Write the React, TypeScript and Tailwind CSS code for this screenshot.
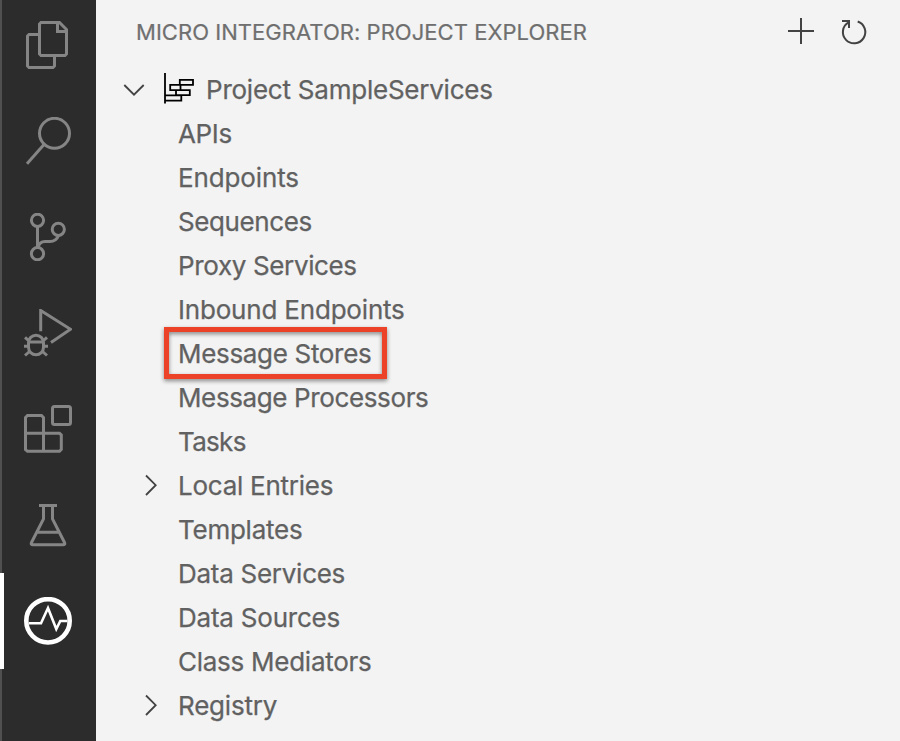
import React from "react";

const icons = [
  <g key="files"><path d="M17 1.5H35.5L42.5 8.5V33L41 34.5H17L15.5 33V3Z" /><path d="M33.5 2V10.5H42" /><path d="M15 13.5H5L3.5 15V45L5 46.5H29L30.5 45V35" /></g>,
  <g key="search"><circle cx="30.5" cy="16.3" r="15" /><path d="M20 27.5L3 46.7" /></g>,
  <g key="branch"><circle cx="13.5" cy="7.3" r="6.1" /><circle cx="34.3" cy="16.3" r="6.1" /><circle cx="13.5" cy="40.7" r="6.1" /><path d="M13.5 13.4V34.6M34.6 22.5C33 26.5 30 28.6 26 28.6H21C17.5 28.6 15 30.5 14 34.5" /></g>,
  <g key="debug"><path d="M16.7 22.3V1.5L46.5 20.3L27 33.5" /><rect x="4.5" y="26.2" width="15" height="19.6" rx="7.5" /><path d="M4.5 33H19.5M0 37.3H4.5M19.5 37.3H24M1 28.3L5 32M23 28.3L19 32M1 46.5L5.5 42.5M23 46.5L18.5 42.5" /></g>,
  <g key="extensions"><rect x="28.5" y="1.5" width="18" height="18" rx="2" /><path d="M3.5 10.5H17.5L19.5 12.5V28.3H35.5L37.3 30V44.5L35.5 46.3H3.5L1.5 44.5V12.5ZM1.5 28.3H19.5V46.3" /></g>,
  <g key="test"><path d="M15 4.5H33M19.5 4.5V18L7.5 41.5Q6.5 43.8 9 43.8H39Q41.5 43.8 40.5 41.5L28.5 18V4.5M12.5 31.3H35.5" /></g>,
  <g key="integrator"><circle cx="24" cy="23.8" r="21.7" strokeWidth="4.6" /><path d="M5 26.3H17L24 11L32.3 32L36.3 24H43.5" strokeWidth="2.6" /></g>,
];

const rows = [
  { label: "APIs", tracking: "tracking-[-0.35px]" },
  { label: "Endpoints", tracking: "tracking-[-0.12px]" },
  { label: "Sequences", tracking: "tracking-[-0.39px]" },
  { label: "Proxy Services", tracking: "tracking-[-0.36px]" },
  { label: "Inbound Endpoints", tracking: "tracking-[-0.19px]" },
  { label: "Message Stores", tracking: "tracking-[-0.32px]", marked: true },
  { label: "Message Processors", tracking: "tracking-[-0.38px]" },
  { label: "Tasks", tracking: "tracking-[-0.7px]" },
  { label: "Local Entries", tracking: "tracking-[-0.25px]", nested: true },
  { label: "Templates", tracking: "tracking-[-0.25px]" },
  { label: "Data Services", tracking: "tracking-[-0.27px]" },
  { label: "Data Sources", tracking: "tracking-[-0.22px]" },
  { label: "Class Mediators", tracking: "tracking-[-0.26px]" },
  { label: "Registry", tracking: "tracking-[-0.2px]", nested: true },
];

export default function App() {
  return (
    <div className="flex h-[741px] w-[900px] overflow-hidden bg-[#f3f3f3] font-['Inter',sans-serif]">
      <nav className="relative flex w-24 shrink-0 flex-col items-center gap-12 border-l-2 border-[#505050] bg-[#2c2c2c] pt-[21px] pr-0.5">
        <div className="absolute top-[573px] -left-0.5 h-24 w-1 bg-white" />
        {icons.map((icon, i) => (
          <svg key={i} viewBox="0 0 48 48" fill="none" strokeWidth="3" className={i === 6 ? "size-12 shrink-0 stroke-white" : "size-12 shrink-0 stroke-[#858585]"}>
            {icon}
          </svg>
        ))}
      </nav>
      <main className="min-w-0 flex-1">
        <header className="flex h-[68px] items-start pl-10">
          <h1 className="mt-4 text-[22px] leading-8 tracking-[0.04px] whitespace-nowrap text-[#6f6f6f] [-webkit-text-stroke:0.2px]">MICRO INTEGRATOR: PROJECT EXPLORER</h1>
          <div className="mt-4 mr-[31px] ml-auto flex gap-5 text-[#424242]">
            <svg viewBox="0 0 32 32" className="size-8" fill="none" stroke="currentColor" strokeWidth="2"><path d="M3 15H29M16 2V28" /></svg>
            <svg viewBox="0 0 32 32" className="size-8" fill="none" stroke="currentColor" strokeWidth="2"><path d="M20.7 5.5A11.2 11.2 0 1 1 11.5 6.4M5 5H12V12" /></svg>
          </div>
        </header>
        <div className="flex h-11 items-center text-[26px] text-[#616161]">
          <svg viewBox="0 0 32 32" className="ml-[22px] size-8 shrink-0" fill="none" stroke="#424242" strokeWidth="1.8"><path d="M6.3 11L16 20.7L25.7 11" /></svg>
          <svg viewBox="0 0 32 32" className="ml-3 size-8 shrink-0 overflow-visible" fill="none" stroke="#000" strokeWidth="1.8"><path d="M3 -1V29.5M17.8 5.8H31V10.8H17.8ZM8.2 10.8H18.5V16.2H8.2ZM14 16.2H27.8V21.2H14ZM3 21.4H19.3V26.6H3Z" /></svg>
          <span className="mb-0.5 ml-3 tracking-[-0.23px] whitespace-nowrap [-webkit-text-stroke:0.25px]">Project SampleServices</span>
        </div>
        <ul>
          {rows.map((row) => (
            <li key={row.label} className="flex h-11 items-center text-[26px] text-[#616161]">
              <span className="ml-[38px] size-8 shrink-0">
                {row.nested && <svg viewBox="0 0 32 32" className="size-8" fill="none" stroke="#424242" strokeWidth="1.8"><path d="M12 5.5L21.7 15.2L12 25" /></svg>}
              </span>
              <span className={`relative mb-0.5 ml-3 whitespace-nowrap [-webkit-text-stroke:0.25px] ${row.tracking}`}>
                {row.label}
                {row.marked && <span className="absolute -top-[7px] -left-[14px] h-[52px] w-[223px] border-[5px] border-[#ec4228] drop-shadow-[0_2px_2px_rgba(0,0,0,0.45)]" />}
              </span>
            </li>
          ))}
        </ul>
      </main>
    </div>
  );
}
